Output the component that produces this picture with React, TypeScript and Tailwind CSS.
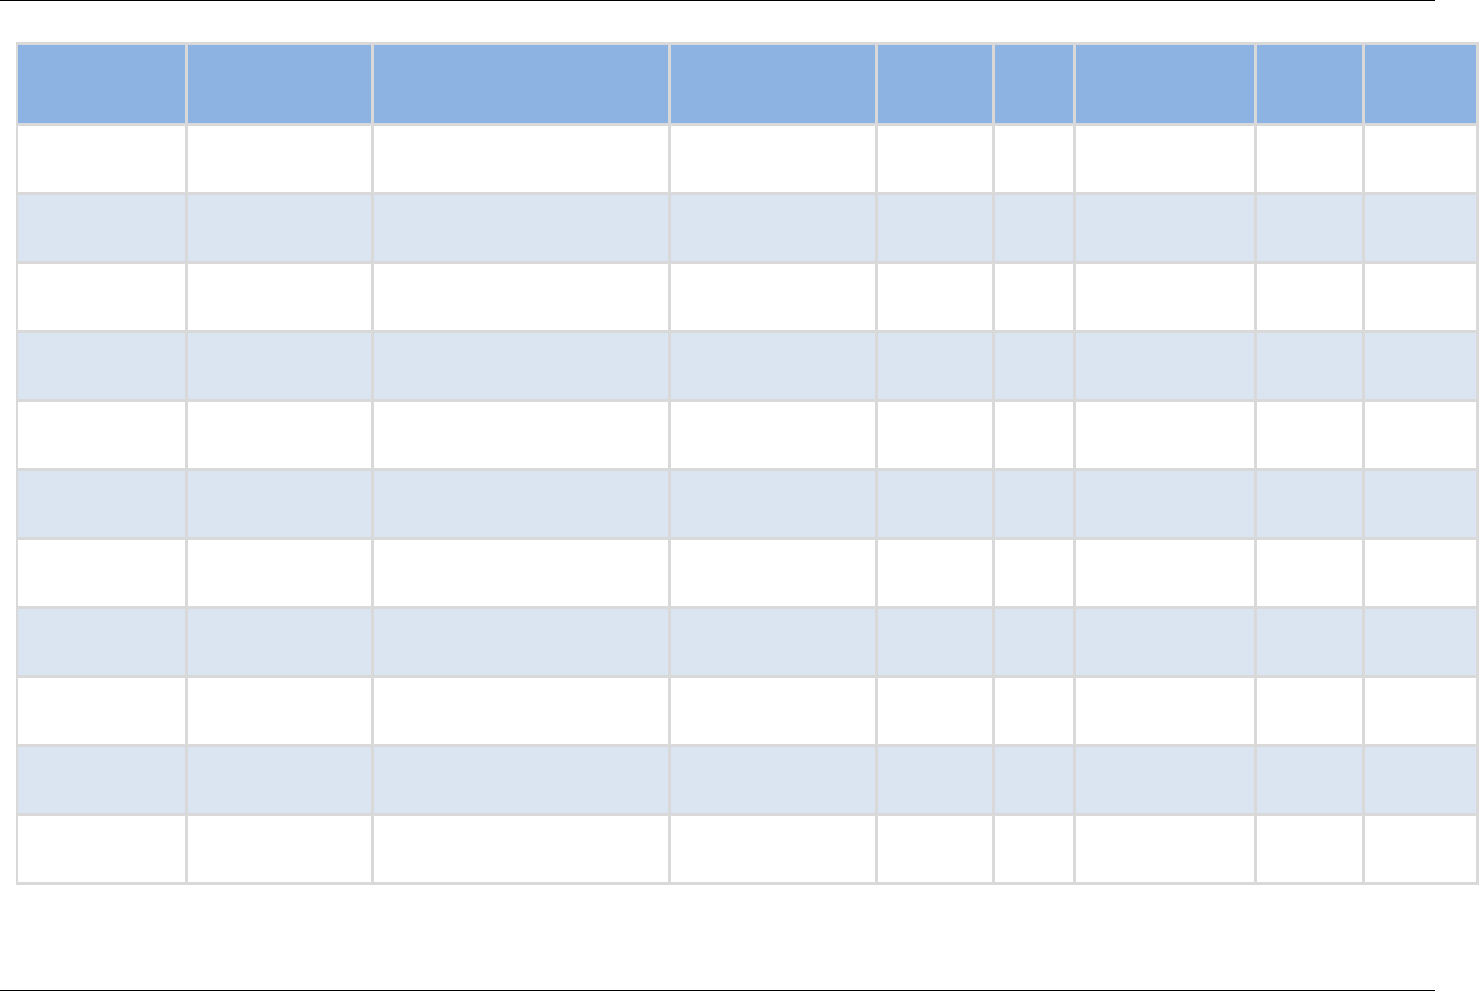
import React from "react";

const cols = "167px 183px 294px 204px 114px 78px 178px 105px 111px";

export default function App() {
  const rows = Array.from({ length: 11 }, (_, i) => i);
  return (
    <div className="w-[1479px] h-[991px] bg-white relative overflow-hidden font-['Liberation_Sans',sans-serif]">
      <div className="h-px w-[1435px] bg-black" />
      <div className="mt-[41px] ml-[16px] w-[1463px] bg-[#d9d9d9] pl-[2px] pt-[3px] pr-[3px] pb-[3px]">
        <div
          className="grid gap-[3px]"
          style={{ gridTemplateColumns: cols }}
        >
          {Array.from({ length: 9 }, (_, c) => (
            <div key={`h${c}`} className="h-[78px] bg-[#8db3e2]" />
          ))}
          {rows.map((r) =>
            Array.from({ length: 9 }, (_, c) => (
              <div
                key={`${r}-${c}`}
                className={
                  r % 2 === 0 ? "h-[66px] bg-white" : "h-[66px] bg-[#dbe5f1]"
                }
              />
            ))
          )}
        </div>
      </div>
      <div className="absolute left-0 top-[990px] h-px w-[1435px] bg-black" />
    </div>
  );
}
